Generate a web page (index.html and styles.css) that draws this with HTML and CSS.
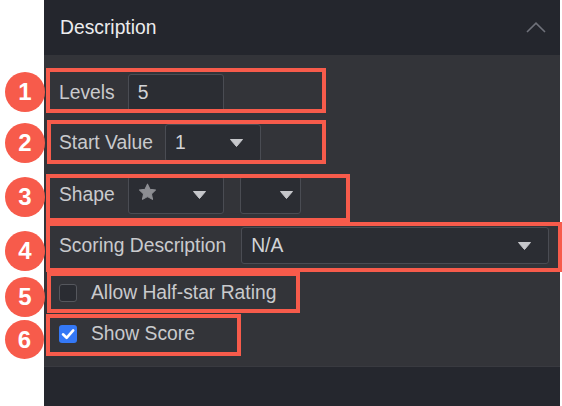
FILE: index.html
```html
<!DOCTYPE html>
<html lang="en">
<head>
<meta charset="utf-8">
<title>Description settings</title>
<link rel="stylesheet" href="styles.css">
</head>
<body>
<div class="page">
  <div class="gutter"></div>
  <section class="panel">
    <header class="panel-head">
      <span class="title">Description</span>
      <svg class="chevron" width="20" height="11" viewBox="0 0 20 11"><polyline points="1,10 10,1.2 19,10" fill="none" stroke="#6f717a" stroke-width="1.6"/></svg>
    </header>
    <div class="panel-body">
      <div class="row row-1">
        <span class="badge b1">1</span>
        <span class="label">Levels</span>
        <div class="field w-96"><span class="value">5</span></div>
      </div>
      <div class="row row-2">
        <span class="badge b2">2</span>
        <span class="label">Start Value</span>
        <div class="field w-96"><span class="value">1</span><svg class="caret" width="13" height="8" viewBox="0 0 13 8"><polygon points="0.5,0.5 12.5,0.5 6.5,7.5" fill="#c6c7cb" stroke="#c6c7cb" stroke-linejoin="round" stroke-width="1"/></svg></div>
      </div>
      <div class="row row-3">
        <span class="badge b3">3</span>
        <span class="label">Shape</span>
        <div class="picks">
          <div class="field w-96"><svg class="star" width="19" height="18" viewBox="0 0 24 23"><polygon points="12,1.5 15.1,8 22.3,8.9 17,13.8 18.4,20.9 12,17.4 5.6,20.9 7,13.8 1.7,8.9 8.9,8" fill="#8d8e93" stroke="#8d8e93" stroke-width="1.4" stroke-linejoin="round"/></svg><svg class="caret" width="13" height="8" viewBox="0 0 13 8"><polygon points="0.5,0.5 12.5,0.5 6.5,7.5" fill="#c6c7cb" stroke="#c6c7cb" stroke-linejoin="round" stroke-width="1"/></svg></div>
          <div class="field w-61 end"><svg class="caret" width="13" height="8" viewBox="0 0 13 8"><polygon points="0.5,0.5 12.5,0.5 6.5,7.5" fill="#c6c7cb" stroke="#c6c7cb" stroke-linejoin="round" stroke-width="1"/></svg></div>
        </div>
      </div>
      <div class="row row-4">
        <span class="badge b4">4</span>
        <span class="label">Scoring Description</span>
        <div class="field w-308 short"><span class="value">N/A</span><svg class="caret" width="13" height="8" viewBox="0 0 13 8"><polygon points="0.5,0.5 12.5,0.5 6.5,7.5" fill="#c6c7cb" stroke="#c6c7cb" stroke-linejoin="round" stroke-width="1"/></svg></div>
      </div>
      <div class="row row-5 check-row">
        <span class="badge b5">5</span>
        <span class="checkbox"></span>
        <span class="label">Allow Half-star Rating</span>
      </div>
      <div class="row row-6 check-row">
        <span class="badge b6">6</span>
        <span class="checkbox checked"><svg width="18" height="18" viewBox="0 0 18 18"><polyline points="4,9.3 7.6,12.8 14.2,5.4" fill="none" stroke="#ffffff" stroke-width="2.6" stroke-linecap="round" stroke-linejoin="round"/></svg></span>
        <span class="label">Show Score</span>
      </div>
    </div>
    <div class="panel-foot"></div>
  </section>
</div>
</body>
</html>
```
FILE: styles.css
```css
html, body {
  margin: 0;
  padding: 0;
  background: #ffffff;
}

body {
  font-family: "Liberation Sans", Arial, Helvetica, sans-serif;
  font-size: 19.3px;
}

.page {
  display: flex;
  width: 562px;
  height: 406px;
  overflow: hidden;
}

.gutter {
  width: 44px;
  flex: none;
}

.panel {
  width: 516px;
  flex: none;
  display: flex;
  flex-direction: column;
}

.panel-head {
  height: 55px;
  flex: none;
  background: #24262d;
  display: flex;
  align-items: center;
  justify-content: space-between;
  padding: 0 14px 0 16px;
  box-sizing: border-box;
}

.title {
  color: #ececee;
}

.chevron {
  display: block;
  margin-top: -1px;
}

.panel-body {
  height: 311px;
  flex: none;
  box-sizing: border-box;
  background: #333439;
  padding: 13px 0 0 2px;
  display: flex;
  flex-direction: column;
  align-items: flex-start;
}

.panel-foot {
  flex: 1;
  background: #25272e;
  border-top: 1px solid #393a40;
}

.row {
  position: relative;
  display: flex;
  align-items: center;
  gap: 13px;
  box-sizing: border-box;
  padding-left: 13px;
  flex: none;
}

.row::after {
  content: "";
  position: absolute;
  inset: 0;
  border: 4px solid #f75b4b;
  pointer-events: none;
  z-index: 2;
}

.row-1 { width: 280px; height: 45px; padding-top: 5px; }
.row-2 { width: 279px; height: 44px; margin-top: 7px; margin-left: 1px; padding-top: 2px; padding-left: 12px; gap: 12px; }
.row-3 { width: 304px; height: 48px; margin-top: 10px; padding-bottom: 6px; }
.row-4 { width: 516px; height: 50px; padding-bottom: 3px; gap: 15px; }
.row-5 { width: 253px; height: 41px; margin-left: 1px; padding-left: 12px; }
.row-6 { width: 195px; height: 42px; margin-top: 1px; padding-bottom: 3px; }

.check-row { gap: 14px; }

.badge {
  position: absolute;
  left: -41px;
  width: 40px;
  height: 40px;
  border-radius: 50%;
  background: #f75b4b;
  color: #ffffff;
  font-weight: bold;
  font-size: 24px;
  display: flex;
  align-items: center;
  justify-content: center;
  z-index: 3;
}

.row-2 .badge, .row-5 .badge { left: -42px; }

.b1 { top: 4px; }
.b2 { top: 3px; }
.b3 { top: 3px; }
.b4 { top: 9px; }
.b5 { top: 5px; }
.b6 { top: 6px; height: 39px; width: 39px; }

.label {
  color: #c9cacd;
  white-space: nowrap;
}

.picks {
  display: flex;
  gap: 16px;
}

.field {
  box-sizing: border-box;
  height: 38px;
  border: 1px solid #4a4c53;
  border-radius: 3px;
  background: #2b2d33;
  display: flex;
  align-items: center;
  justify-content: space-between;
  padding: 0 17px 0 9px;
  flex: none;
}

.field.short { height: 37px; }
.field.end { justify-content: flex-end; padding-right: 7px; }

.w-96 { width: 96px; }
.w-61 { width: 61px; }
.w-308 { width: 308px; }

.value {
  color: #d3d4d7;
}

.caret {
  display: block;
}

.star {
  display: block;
  margin-top: -6px;
}

.checkbox {
  width: 18px;
  height: 18px;
  box-sizing: border-box;
  border: 1px solid #55575d;
  border-radius: 3px;
  background: #2a2c32;
  flex: none;
}

.checkbox.checked {
  border: none;
  background: #3478f6;
}

.checkbox svg {
  display: block;
}
```
